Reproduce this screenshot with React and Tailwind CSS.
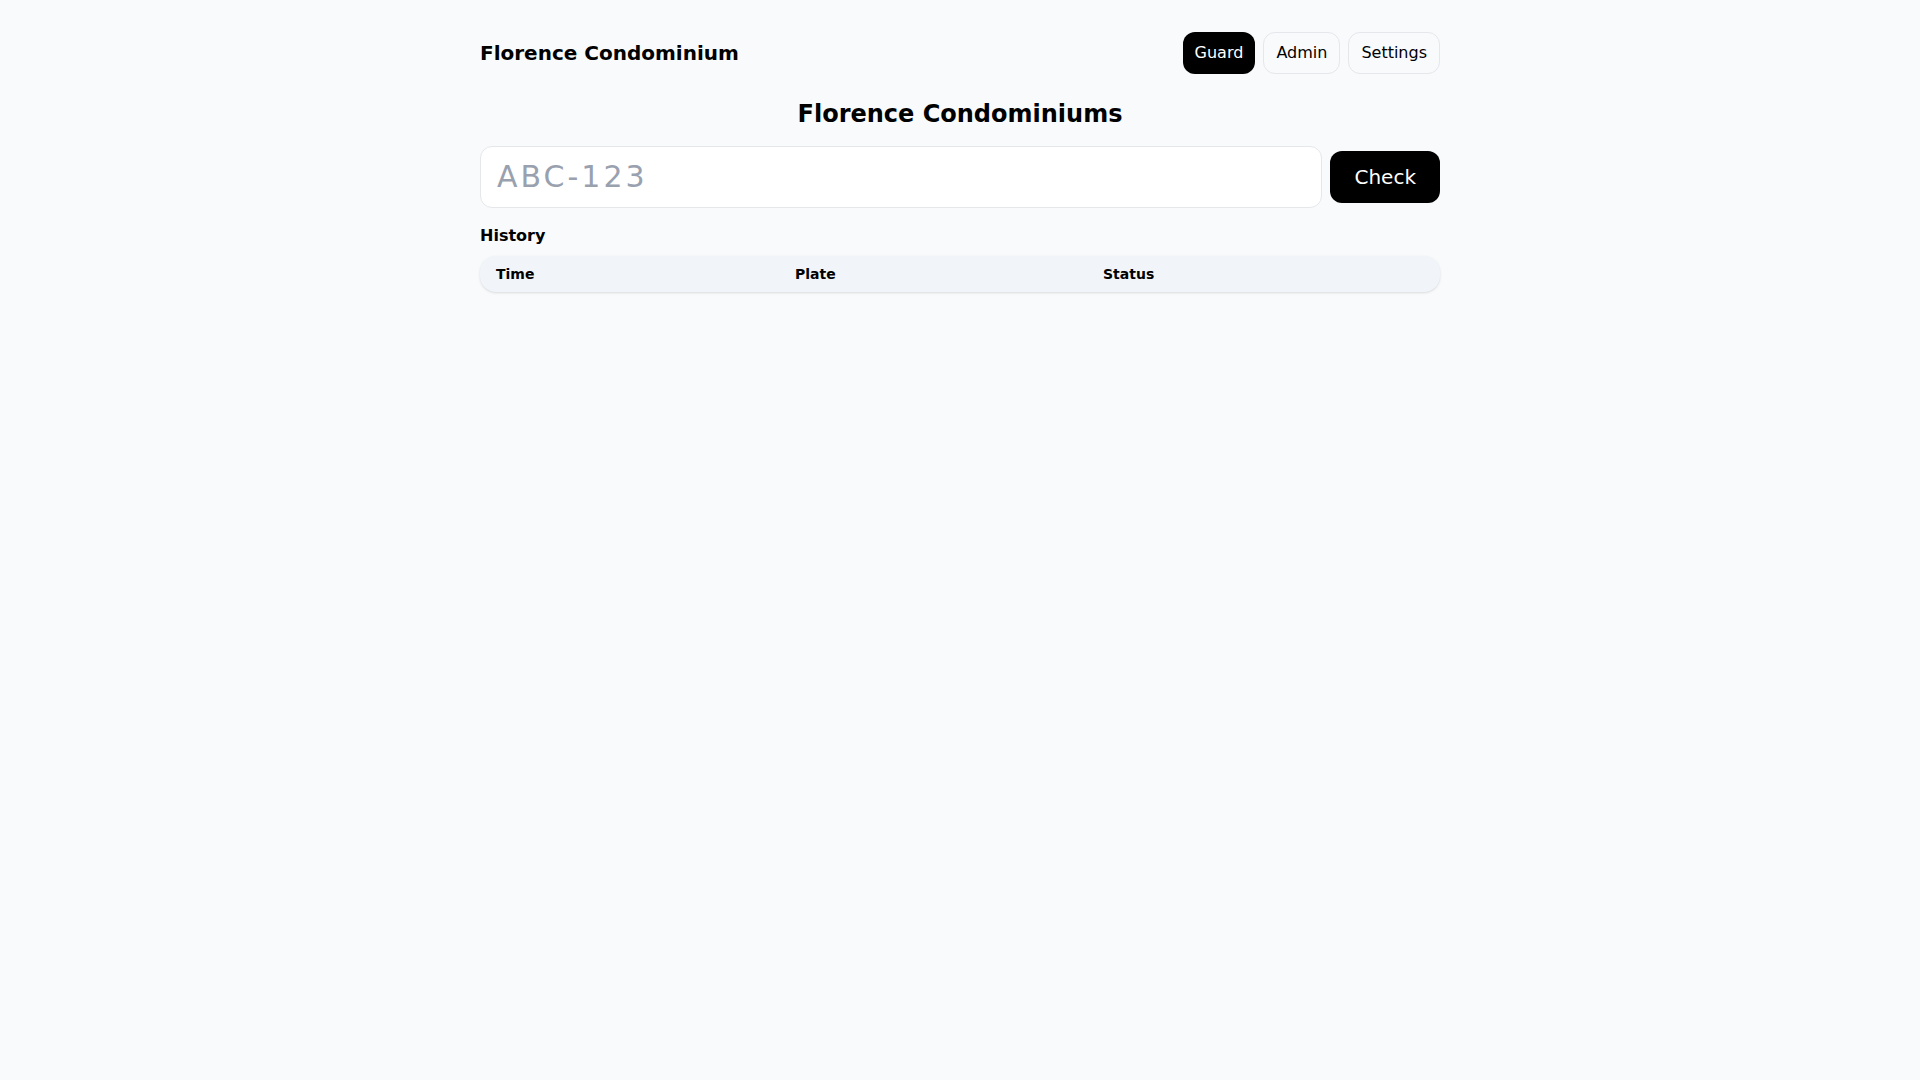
import { useState } from "react";

const NAV = ["Guard", "Admin", "Settings"];

export default function App() {
  const [active, setActive] = useState("Guard");
  const [plate, setPlate] = useState("");

  return (
    <div className="min-h-screen bg-[#f8fafc] font-['DejaVu_Sans',sans-serif] text-black">
      <div className="mx-auto max-w-[960px] pt-8">
        <header className="flex items-center justify-between">
          <h1 className="text-xl font-bold">Florence Condominium</h1>
          <nav className="flex gap-2">
            {NAV.map((name) => (
              <button
                key={name}
                onClick={() => setActive(name)}
                className={
                  active === name
                    ? "rounded-xl bg-black px-3 py-2 text-base text-white"
                    : "rounded-xl border border-gray-200 bg-[#f8fafc] px-3 py-2 text-base text-black"
                }
              >
                {name}
              </button>
            ))}
          </nav>
        </header>

        <h2 className="mt-6 text-center text-2xl font-bold">
          Florence Condominiums
        </h2>

        <div className="mt-4 flex items-center gap-2">
          <input
            value={plate}
            onChange={(e) => setPlate(e.target.value)}
            placeholder="ABC-123"
            className="min-w-0 flex-1 rounded-xl border border-gray-200 bg-white px-4 py-3 text-3xl tracking-widest placeholder:text-gray-400 outline-none"
          />
          <button className="rounded-xl bg-black px-6 py-3 text-xl text-white">
            Check
          </button>
        </div>

        <h3 className="mt-4 text-base font-bold">History</h3>

        <div className="mt-2 overflow-hidden rounded-2xl bg-[#f1f5f9] shadow-sm">
          <div className="grid grid-cols-[299px_308px_1fr] text-sm font-bold">
            <div className="px-4 py-2">Time</div>
            <div className="px-4 py-2">Plate</div>
            <div className="px-4 py-2">Status</div>
          </div>
        </div>
      </div>
    </div>
  );
}
